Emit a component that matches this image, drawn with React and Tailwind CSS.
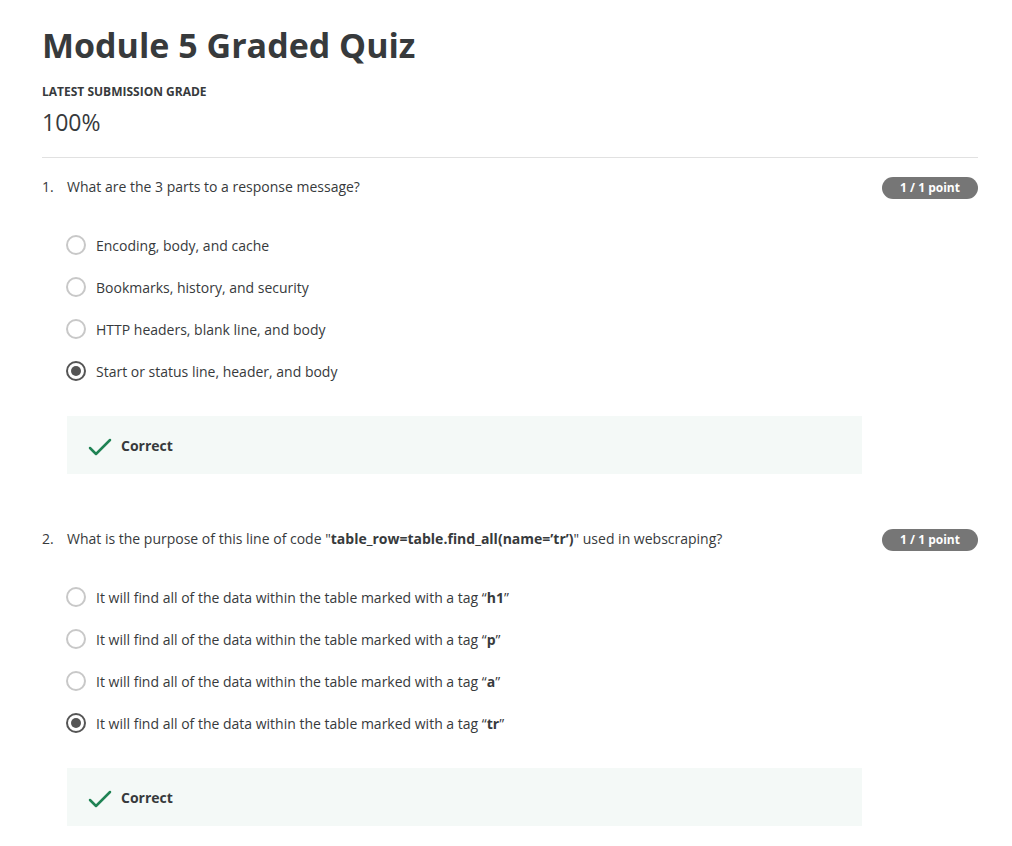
import React from "react";

const font = { fontFamily: '"Open Sans", "Noto Sans", sans-serif' };

function Radio({ checked }) {
  return checked ? (
    <span className="flex h-[20px] w-[20px] shrink-0 items-center justify-center rounded-full border-2 border-[#555]">
      <span className="h-[10px] w-[10px] rounded-full bg-[#555]" />
    </span>
  ) : (
    <span className="h-[20px] w-[20px] shrink-0 rounded-full border-2 border-[#c8c8c8]" />
  );
}

function Option({ checked, children }) {
  return (
    <div className="flex h-[42px] items-center">
      <Radio checked={checked} />
      <span className="ml-[10px] text-[14px] text-[#373a3c]">{children}</span>
    </div>
  );
}

function Correct() {
  return (
    <div className="ml-px mt-[24px] flex h-[58px] w-[795px] items-center bg-[#f4f9f7] pl-[21px]">
      <svg width="24" height="24" viewBox="0 0 24 24" fill="none">
        <path d="M2 15 L8 21 L22 7" stroke="#1f8354" strokeWidth="2.5" strokeLinecap="round" strokeLinejoin="round" />
      </svg>
      <span className="ml-[9px] text-[14px] font-bold text-[#373a3c]">Correct</span>
    </div>
  );
}

function Question({ num, title, options, selected, className = "" }) {
  return (
    <div className={className}>
      <div className="flex items-start justify-between">
        <div className="flex text-[14px] leading-[20px] text-[#373a3c]">
          <span className="w-[25px]">{num}.</span>
          <span>{title}</span>
        </div>
        <span className="flex h-[22px] w-[96px] items-center justify-center rounded-full bg-[#767676] text-[12px] font-bold text-white">
          1 / 1 point
        </span>
      </div>
      <div className="ml-[24px] mt-[25px]">
        {options.map((o, i) => (
          <Option key={i} checked={i === selected}>
            {o}
          </Option>
        ))}
        <Correct />
      </div>
    </div>
  );
}

export default function App() {
  const tag = (t) => (
    <>
      It will find all of the data within the table marked with a tag “<b>{t}</b>”
    </>
  );
  return (
    <div style={font} className="min-h-[846px] bg-white pl-[42px] pr-[34px] pt-[22px] text-[#373a3c]">
      <h1 className="text-[34px] font-bold leading-[46px] text-[#373a3c]">Module 5 Graded Quiz</h1>
      <div className="mt-[16px] text-[12px] font-bold leading-[16px]">LATEST SUBMISSION GRADE</div>
      <div className="mt-[7px] text-[23px] leading-[30px]">100%</div>
      <div className="mt-[20px] h-px bg-[#e1e1e1]" />
      <Question
        className="mt-[19px]"
        num={1}
        title="What are the 3 parts to a response message?"
        options={[
          "Encoding, body, and cache",
          "Bookmarks, history, and security",
          "HTTP headers, blank line, and body",
          "Start or status line, header, and body",
        ]}
        selected={3}
      />
      <Question
        className="mt-[55px]"
        num={2}
        title={
          <>
            What is the purpose of this line of code "<b>table_row=table.find_all(name=’tr’)</b>" used in webscraping?
          </>
        }
        options={[tag("h1"), tag("p"), tag("a"), tag("tr")]}
        selected={3}
      />
    </div>
  );
}
